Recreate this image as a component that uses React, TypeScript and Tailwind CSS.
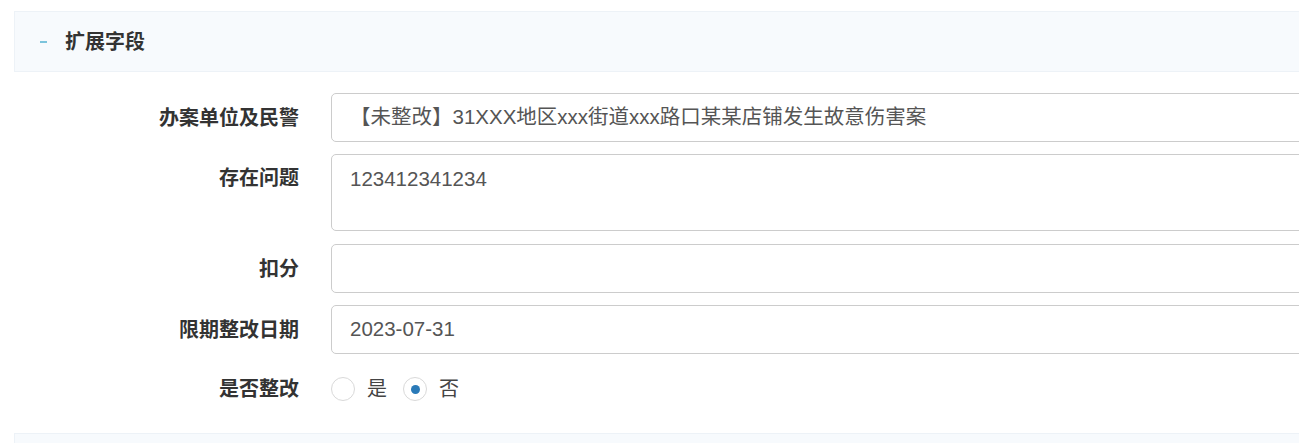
import React from "react";

const font = "font-['Liberation_Sans','Noto_Sans_CJK_SC',sans-serif]";

function Field({ label, value, tall }: { label: string; value?: string; tall?: boolean }) {
  return (
    <div className={`flex ${tall ? "items-start" : "items-center"}`}>
      <div
        className={`w-[299px] shrink-0 text-right text-[20px] font-bold text-[#333] ${tall ? "pt-[12px] leading-[24px]" : ""}`}
      >
        {label}
      </div>
      <div
        className={`ml-[32px] flex-1 rounded-[5px] border border-[#ccc] bg-white pl-[18px] text-[20.5px] text-[#555] ${
          tall ? "h-[77px] pt-[12px] leading-[24px]" : "flex h-[49px] items-center"
        }`}
      >
        {value}
      </div>
    </div>
  );
}

function Radio({ checked, label }: { checked?: boolean; label: string }) {
  return (
    <div className="flex items-center">
      <span className="flex h-[24px] w-[24px] items-center justify-center rounded-full border-[1.5px] border-[#d9d9d9] bg-white">
        {checked && <span className="h-[9px] w-[9px] rounded-full bg-[#2a7ab8]" />}
      </span>
      <span className="ml-[12px] text-[20px] text-[#444]">{label}</span>
    </div>
  );
}

export default function App() {
  return (
    <div className={`h-[443px] w-full overflow-hidden bg-white ${font}`}>
      <div className="w-[1340px] pt-[11px]">
        <div className="ml-[14px] flex h-[61px] items-center border border-[#edf2f7] bg-[#f7fafd]">
          <span className="ml-[25px] h-[2px] w-[7px] bg-[#7cc4dc]" />
          <span className="ml-[18px] text-[20px] font-bold text-[#333]">扩展字段</span>
        </div>

        <div className="mt-[21px] flex flex-col gap-[12px]">
          <Field label="办案单位及民警" value="【未整改】31XXX地区xxx街道xxx路口某某店铺发生故意伤害案" />
          <Field label="存在问题" value="123412341234" tall />
          <div className="mt-[1px]">
            <Field label="扣分" />
          </div>
          <Field label="限期整改日期" value="2023-07-31" />
        </div>

        <div className="mt-[23px] flex h-[24px] items-center">
          <div className="w-[299px] shrink-0 text-right text-[20px] font-bold text-[#333]">是否整改</div>
          <div className="ml-[32px] flex items-center gap-[16px]">
            <Radio label="是" />
            <Radio label="否" checked />
          </div>
        </div>

        <div className="ml-[14px] mt-[32px] h-[61px] border border-[#edf2f7] bg-[#f7fafd]" />
      </div>
    </div>
  );
}
